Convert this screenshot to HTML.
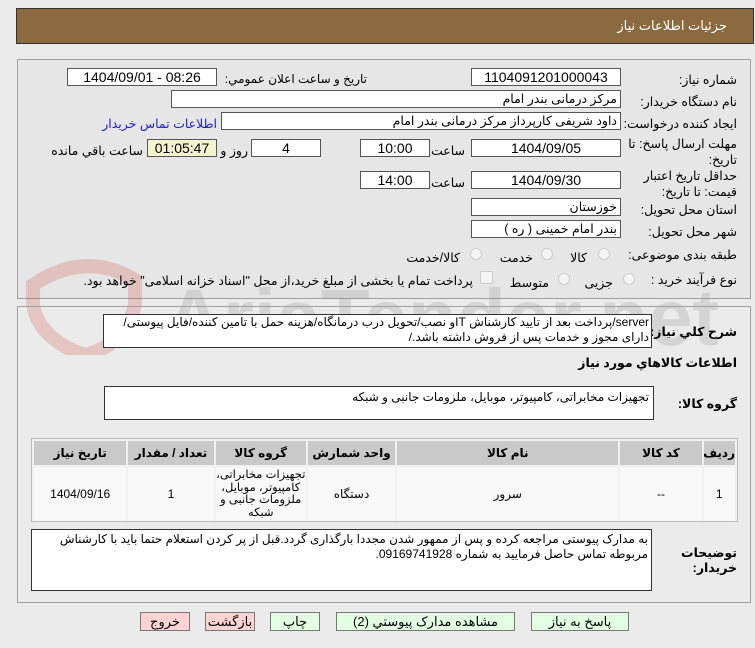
<!DOCTYPE html>
<html><head><meta charset="utf-8"><style>
*{margin:0;padding:0;box-sizing:border-box}
body{width:755px;height:648px;background:#ebebeb;font-family:"Liberation Sans","DejaVu Sans",sans-serif;font-size:12px;color:#000;position:relative;overflow:hidden}
.a{position:absolute;white-space:nowrap}
.r{direction:rtl}
.box{position:absolute;background:#fff;border:1px solid #555;height:18px;line-height:16px;text-align:center;font-size:14px}
.lb{position:absolute;direction:rtl;text-align:right;white-space:nowrap;font-size:12.5px}
.panel{position:absolute;border:1px solid #a0a0a0;background:#e6e6e6}
.rad{position:absolute;width:12px;height:12px;border-radius:50%;border:1px solid #ccc;background:#f4f4f4}
table{border-collapse:separate;border-spacing:2px;table-layout:fixed}
td,th{text-align:center;font-size:12px;overflow:hidden;padding:0}
.btn{position:absolute;top:612px;height:19px;border:1px solid #777;text-align:center;line-height:17px;font-size:13px;direction:rtl}
.g{background:#e2ffe2}.p{background:#ffd3d3}
</style></head><body>
<div class="a" style="left:16px;top:8px;width:738px;height:36px;background:#8c6a40;border:1px solid #333"></div>
<div class="lb" style="right:28px;top:18px;color:#fff;font-size:13px">جزئيات اطلاعات نياز</div>

<div class="panel" style="left:17px;top:59px;width:734px;height:240px"></div>
<svg class="a" style="left:15px;top:245px;opacity:.22" width="720" height="110"><path d="M18 40 Q70 5 120 35 L120 60 Q110 100 70 110 Q25 95 18 60Z" fill="none" stroke="#c43" stroke-width="14"/><text x="150" y="100" font-family="Liberation Sans" font-weight="bold" font-size="80" fill="#888">AriaTender.net</text></svg>

<div class="lb" style="right:18px;top:72px">شماره نياز:</div>
<div class="box" style="left:471px;top:68px;width:150px">1104091201000043</div>
<div class="lb" style="right:388px;top:72px;font-size:12px">تاريخ و ساعت اعلان عمومي:</div>
<div class="box" style="left:67px;top:68px;width:150px">1404/09/01 - 08:26</div>

<div class="lb" style="right:18px;top:94px">نام دستگاه خريدار:</div>
<div class="box r" style="left:171px;top:90px;width:450px;text-align:right;padding-right:3px;font-size:12.5px">مرکز درمانی بندر امام</div>

<div class="lb" style="right:18px;top:116px">ايجاد کننده درخواست:</div>
<div class="box r" style="left:221px;top:112px;width:400px;text-align:right;padding-right:3px;font-size:12.5px">داود شریفی کارپرداز مرکز درمانی بندر امام</div>
<div class="lb" style="right:538px;top:116px;color:#2020d0">اطلاعات تماس خريدار</div>

<div class="lb" style="right:18px;top:136px;line-height:16px">مهلت ارسال پاسخ: تا<br>تاريخ:</div>
<div class="box" style="left:471px;top:139px;width:150px">1404/09/05</div>
<div class="lb" style="right:290px;top:143px">ساعت</div>
<div class="box" style="left:360px;top:139px;width:70px">10:00</div>
<div class="box" style="left:251px;top:139px;width:70px">4</div>
<div class="lb" style="right:507px;top:143px">روز و</div>
<div class="box" style="left:147px;top:139px;width:70px;background:#f4f4d0">01:05:47</div>
<div class="lb" style="right:612px;top:143px">ساعت باقي مانده</div>

<div class="lb" style="right:18px;top:168px;line-height:16px">حداقل تاريخ اعتبار<br>قيمت: تا تاريخ:</div>
<div class="box" style="left:471px;top:171px;width:150px">1404/09/30</div>
<div class="lb" style="right:290px;top:175px">ساعت</div>
<div class="box" style="left:360px;top:171px;width:70px">14:00</div>

<div class="lb" style="right:18px;top:202px">استان محل تحويل:</div>
<div class="box r" style="left:471px;top:198px;width:150px;text-align:right;padding-right:3px;font-size:12.5px">خوزستان</div>
<div class="lb" style="right:18px;top:224px">شهر محل تحويل:</div>
<div class="box r" style="left:471px;top:220px;width:150px;text-align:right;padding-right:3px;font-size:12.5px">بندر امام خمینی ( ره )</div>

<div class="lb" style="right:18px;top:247px">طبقه بندی موضوعی:</div>
<div class="rad" style="left:598px;top:248px"></div><div class="lb" style="right:168px;top:250px">کالا</div>
<div class="rad" style="left:541px;top:248px"></div><div class="lb" style="right:222px;top:250px">خدمت</div>
<div class="rad" style="left:470px;top:248px"></div><div class="lb" style="right:295px;top:250px">کالا/خدمت</div>

<div class="lb" style="right:18px;top:272px">نوع فرآيند خريد :</div>
<div class="rad" style="left:623px;top:273px"></div><div class="lb" style="right:142px;top:275px">جزیی</div>
<div class="rad" style="left:558px;top:273px"></div><div class="lb" style="right:206px;top:275px">متوسط</div>
<div class="a" style="left:480px;top:271px;width:13px;height:13px;border:1px solid #ccc;background:#f4f4f4"></div>
<div class="lb" style="right:282px;top:273px">پرداخت تمام یا بخشی از مبلغ خرید،از محل "اسناد خزانه اسلامی" خواهد بود.</div>

<div class="panel" style="left:17px;top:306px;width:734px;height:297px;background:transparent"></div>
<div class="lb" style="right:18px;top:324px;font-weight:bold">شرح کلي نياز:</div>
<div class="a r" style="left:103px;top:314px;width:549px;height:34px;background:#fff;border:1px solid #333;white-space:normal;line-height:15px;font-size:12px;padding:0 2px;text-align:right">server/پرداخت بعد از تایید کارشناش ITو نصب/تحویل درب درمانگاه/هزینه حمل با تامین کننده/فایل پیوستی/ دارای مجوز و خدمات پس از فروش داشته باشد./</div>
<div class="lb" style="right:18px;top:355px;font-weight:bold">اطلاعات کالاهاي مورد نياز</div>
<div class="lb" style="right:18px;top:396px;font-weight:bold">گروه کالا:</div>
<div class="a r" style="left:104px;top:386px;width:550px;height:34px;background:#fff;border:1px solid #333;text-align:right;padding:3px 4px;font-size:12px">تجهیزات مخابراتی، کامپیوتر، موبایل، ملزومات جانبی و شبکه</div>

<div class="a" style="left:31px;top:438px;width:707px;height:84px;border:1px solid #bbb;background:#f0f0f0;overflow:hidden">
<table class="r" style="width:705px;height:82px">
<colgroup><col style="width:31px"><col style="width:80px"><col style="width:218px"><col style="width:86px"><col style="width:89px"><col style="width:84px"><col style="width:91px"></colgroup>
<tr style="height:24px;background:#c9c9c9;font-weight:bold"><th>رديف</th><th>کد کالا</th><th>نام کالا</th><th>واحد شمارش</th><th>گروه کالا</th><th>تعداد / مقدار</th><th>تاريخ نياز</th></tr>
<tr style="background:#f8f8f8;height:54px"><td>1</td><td>--</td><td>سرور</td><td>دستگاه</td><td style="line-height:12.5px;font-size:11.5px;white-space:normal">تجهیزات مخابراتی، کامپیوتر، موبایل، ملزومات جانبی و شبکه</td><td>1</td><td>1404/09/16</td></tr>
</table></div>

<div class="lb" style="right:18px;top:546px;font-weight:bold;line-height:15px">توضيحات<br>خريدار:</div>
<div class="a r" style="left:31px;top:529px;width:621px;height:62px;background:#fff;border:1px solid #333;white-space:normal;text-align:right;line-height:15px;padding:2px 3px;font-size:12px">به مدارک پیوستی مراجعه کرده و پس از ممهور شدن مجددا بارگذاری گردد.قبل از پر کردن استعلام حتما باید با کارشناش مربوطه تماس حاصل فرمایید به شماره 09169741928.</div>

<div class="btn g" style="left:531px;width:98px">پاسخ به نياز</div>
<div class="btn g" style="left:336px;width:179px">مشاهده مدارک پيوستي (2)</div>
<div class="btn g" style="left:270px;width:50px">چاپ</div>
<div class="btn p" style="left:205px;width:50px">بازگشت</div>
<div class="btn p" style="left:140px;width:50px">خروج</div>
</body></html>
